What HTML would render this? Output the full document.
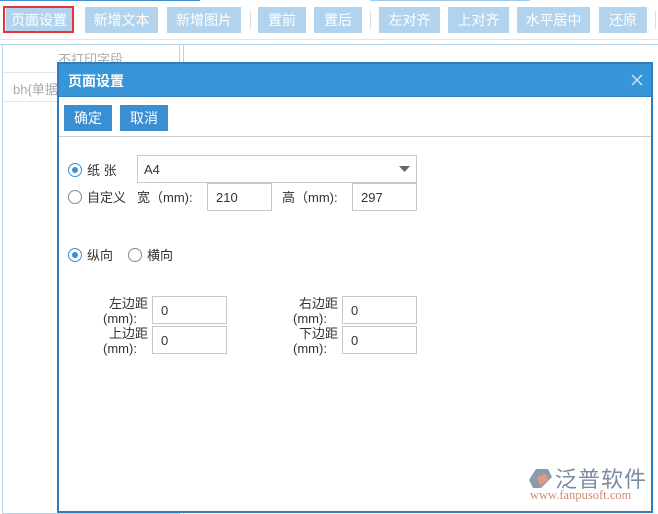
<!DOCTYPE html>
<html><head><meta charset="utf-8"><style>
*{margin:0;padding:0;box-sizing:border-box}
body{width:658px;height:513px;position:relative;overflow:hidden;background:#fff;font-family:"Liberation Sans","Noto Sans CJK SC",sans-serif;font-size:13px;color:#333}
.a{position:absolute}
.tb{position:absolute;top:7px;height:26px;background:#b1d3ed;color:#fff;font-size:14px;line-height:26px;text-align:center}
.sep{position:absolute;top:11px;width:1px;height:18px;background:#ddd}
.inp{position:absolute;border:1px solid #c8c8c8;background:#fff;height:28px;line-height:28px;padding-left:8px;font-size:13px;color:#333}
.rad{position:absolute;width:14px;height:14px;border:1px solid #888;border-radius:50%;background:#fff}
.rad.on{border-color:#3a8fd6}
.rad.on:after{content:"";position:absolute;left:3px;top:3px;width:6px;height:6px;border-radius:50%;background:#3a8fd6}
.lb{position:absolute;font-size:13px;color:#333;white-space:nowrap}
.btn{position:absolute;top:105px;height:26px;width:48px;background:#3a8fd2;color:#fff;font-size:14px;line-height:26px;text-align:center}
</style></head><body>
<div class="a" style="left:0;top:0;width:200px;height:1px;background:#3a8fd6"></div>
<div class="a" style="left:370px;top:0;width:160px;height:1px;background:#9ccbef"></div>
<div class="tb" style="left:6px;width:66px;">页面设置</div>
<div class="a" style="left:3px;top:6px;width:71px;height:27px;border:2px solid #e8333a"></div>
<div class="tb" style="left:85px;width:73px">新增文本</div>
<div class="tb" style="left:167px;width:74px">新增图片</div>
<div class="sep" style="left:250px"></div>
<div class="tb" style="left:258px;width:48px">置前</div>
<div class="tb" style="left:314px;width:48px">置后</div>
<div class="sep" style="left:370px"></div>
<div class="tb" style="left:379px;width:61px">左对齐</div>
<div class="tb" style="left:448px;width:61px">上对齐</div>
<div class="tb" style="left:517px;width:73px">水平居中</div>
<div class="tb" style="left:599px;width:48px">还原</div>
<div class="sep" style="left:655px"></div>
<div class="a" style="left:0;top:39px;width:658px;height:1px;background:#e3e3e3"></div>
<div class="a" style="left:0;top:44px;width:658px;height:1px;background:#b7d3e8"></div>
<div class="a" style="left:2px;top:44px;width:178px;height:470px;border:1px solid #b7d3e8;border-top:none"></div>
<div class="a" style="left:183px;top:44px;width:475px;height:470px;border-left:1px solid #b7d3e8"></div>
<div class="lb" style="left:58px;top:49px;color:#aaa">不打印字段</div>
<div class="a" style="left:3px;top:72px;width:176px;height:1px;background:#e5e5e5"></div>
<div class="lb" style="left:13px;top:79px;color:#aaa">bh{单据</div>
<div class="a" style="left:3px;top:101px;width:176px;height:1px;background:#e5e5e5"></div>
<div class="a" style="left:57px;top:62px;width:596px;height:451px;border:2px solid #2e7fc0;background:#fff"></div>
<div class="a" style="left:59px;top:64px;width:592px;height:33px;background:#3795d8;border-bottom:1px solid #2e7fc0"></div>
<div class="lb" style="left:68px;top:71px;color:#fff;font-weight:bold;font-size:14px">页面设置</div>
<svg class="a" style="left:631px;top:74px" width="12" height="12"><path d="M1 1L11 11M11 1L1 11" stroke="#cfe3f5" stroke-width="1.5"/></svg>
<div class="btn" style="left:64px">确定</div>
<div class="btn" style="left:120px">取消</div>
<div class="a" style="left:59px;top:136px;width:592px;height:1px;background:#ccc"></div>
<div class="rad on" style="left:68px;top:163px"></div>
<div class="lb" style="left:87px;top:160px">纸 张</div>
<div class="inp" style="left:137px;top:155px;width:280px;height:28px;padding-left:6px">A4</div>
<svg class="a" style="left:399px;top:166px" width="12" height="7"><path d="M0 0H11L5.5 6Z" fill="#666"/></svg>
<div class="rad" style="left:68px;top:190px"></div>
<div class="lb" style="left:87px;top:187px">自定义</div>
<div class="lb" style="left:137px;top:187px">宽（mm):</div>
<div class="inp" style="left:207px;top:183px;width:65px">210</div>
<div class="lb" style="left:282px;top:187px">高（mm):</div>
<div class="inp" style="left:352px;top:183px;width:65px">297</div>
<div class="rad on" style="left:68px;top:248px"></div>
<div class="lb" style="left:87px;top:245px">纵向</div>
<div class="rad" style="left:128px;top:248px"></div>
<div class="lb" style="left:147px;top:245px">横向</div>
<div class="lb" style="left:108px;top:296px;line-height:15px;text-align:right;width:40px">左边距</div>
<div class="lb" style="left:103px;top:311px;line-height:15px">(mm):</div>
<div class="inp" style="left:152px;top:296px;width:75px">0</div>
<div class="lb" style="left:108px;top:326px;line-height:15px;width:40px;text-align:right">上边距</div>
<div class="lb" style="left:103px;top:341px;line-height:15px">(mm):</div>
<div class="inp" style="left:152px;top:326px;width:75px">0</div>
<div class="lb" style="left:298px;top:296px;line-height:15px;width:40px;text-align:right">右边距</div>
<div class="lb" style="left:293px;top:311px;line-height:15px">(mm):</div>
<div class="inp" style="left:342px;top:296px;width:75px">0</div>
<div class="lb" style="left:298px;top:326px;line-height:15px;width:40px;text-align:right">下边距</div>
<div class="lb" style="left:293px;top:341px;line-height:15px">(mm):</div>
<div class="inp" style="left:342px;top:326px;width:75px">0</div>
<svg class="a" style="left:528px;top:468px" width="26" height="22"><path d="M8 1H20L24 9L13 20H5L1 12Z" fill="#8a9bb0"/><path d="M9 9L18 6L20 12L12 18Z" fill="#e59a7a"/></svg>
<div class="lb" style="left:555px;top:462px;font-size:22px;color:#7b8ba3;letter-spacing:1px">泛普软件</div>
<div class="lb" style="left:530px;top:488px;font-size:12.5px;color:#d08c72;font-family:'Liberation Serif',serif">www.fanpusoft.com</div>
</body></html>
